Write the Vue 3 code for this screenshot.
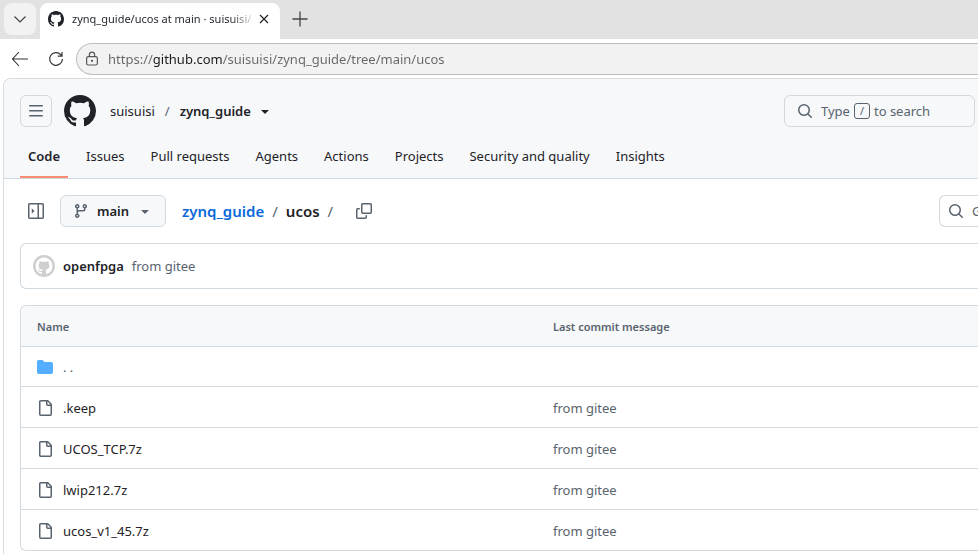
<script setup>
import { h, ref } from 'vue'

const paths = {
  github: 'M8 0c4.42 0 8 3.58 8 8a8.013 8.013 0 0 1-5.45 7.59c-.4.08-.55-.17-.55-.38 0-.27.01-1.13.01-2.2 0-.75-.25-1.23-.54-1.48 1.78-.2 3.65-.88 3.65-3.95 0-.88-.31-1.59-.82-2.15.08-.2.36-1.02-.08-2.12 0 0-.67-.22-2.2.82-.64-.18-1.32-.27-2-.27-.68 0-1.36.09-2 .27-1.53-1.03-2.2-.82-2.2-.82-.44 1.1-.16 1.92-.08 2.12-.51.56-.82 1.28-.82 2.15 0 3.06 1.86 3.75 3.64 3.95-.23.2-.44.55-.51 1.07-.46.21-1.61.55-2.33-.66-.15-.24-.6-.83-1.23-.82-.67.01-.27.38.01.53.34.19.73.9.82 1.13.16.45.68 1.31 2.69.94 0 .67.01 1.3.01 1.49 0 .21-.15.45-.55.38A7.995 7.995 0 0 1 0 8c0-4.42 3.58-8 8-8Z',
  menu: 'M1 2.75A.75.75 0 0 1 1.75 2h12.5a.75.75 0 0 1 0 1.5H1.75A.75.75 0 0 1 1 2.75Zm0 5A.75.75 0 0 1 1.75 7h12.5a.75.75 0 0 1 0 1.5H1.75A.75.75 0 0 1 1 7.75ZM1.75 12h12.5a.75.75 0 0 1 0 1.5H1.75a.75.75 0 0 1 0-1.5Z',
  caret: 'm4.427 7.427 3.396 3.396a.25.25 0 0 0 .354 0l3.396-3.396A.25.25 0 0 0 11.396 7H4.604a.25.25 0 0 0-.177.427Z',
  search: 'M10.68 11.74a6 6 0 0 1-7.922-8.982 6 6 0 0 1 8.982 7.922l3.04 3.04a.749.749 0 0 1-.326 1.275.749.749 0 0 1-.734-.215ZM11.5 7a4.499 4.499 0 1 0-8.997 0A4.499 4.499 0 0 0 11.5 7Z',
  sidebar: 'M4.177 10.323l2.146-2.146a.25.25 0 0 0 0-.354L4.177 5.677A.25.25 0 0 0 3.75 5.854v4.292a.25.25 0 0 0 .427.177ZM0 1.75C0 .784.784 0 1.75 0h12.5C15.216 0 16 .784 16 1.75v12.5A1.75 1.75 0 0 1 14.25 16H1.75A1.75 1.75 0 0 1 0 14.25Zm1.75-.25a.25.25 0 0 0-.25.25v12.5c0 .138.112.25.25.25H9.5v-13Zm12.5 13a.25.25 0 0 0 .25-.25V1.75a.25.25 0 0 0-.25-.25H11v13Z',
  branch: 'M9.5 3.25a2.25 2.25 0 1 1 3 2.122V6A2.5 2.5 0 0 1 10 8.5H6a1 1 0 0 0-1 1v1.128a2.251 2.251 0 1 1-1.5 0V5.372a2.25 2.25 0 1 1 1.5 0v1.836A2.493 2.493 0 0 1 6 7h4a1 1 0 0 0 1-1v-.628A2.25 2.25 0 0 1 9.5 3.25Zm-6 0a.75.75 0 1 0 1.5 0 .75.75 0 0 0-1.5 0Zm8.25-.75a.75.75 0 1 0 0 1.5.75.75 0 0 0 0-1.5ZM4.25 12a.75.75 0 1 0 0 1.5.75.75 0 0 0 0-1.5Z',
  copy: 'M0 6.75C0 5.784.784 5 1.75 5h1.5a.75.75 0 0 1 0 1.5h-1.5a.25.25 0 0 0-.25.25v7.5c0 .138.112.25.25.25h7.5a.25.25 0 0 0 .25-.25v-1.5a.75.75 0 0 1 1.5 0v1.5A1.75 1.75 0 0 1 9.25 16h-7.5A1.75 1.75 0 0 1 0 14.25ZM5 1.75C5 .784 5.784 0 6.75 0h7.5C15.216 0 16 .784 16 1.75v7.5A1.75 1.75 0 0 1 14.25 11h-7.5A1.75 1.75 0 0 1 5 9.25Zm1.75-.25a.25.25 0 0 0-.25.25v7.5c0 .138.112.25.25.25h7.5a.25.25 0 0 0 .25-.25v-7.5a.25.25 0 0 0-.25-.25Z',
  folder: 'M1.75 1A1.75 1.75 0 0 0 0 2.75v10.5C0 14.216.784 15 1.75 15h12.5A1.75 1.75 0 0 0 16 13.25v-8.5A1.75 1.75 0 0 0 14.25 3H7.5a.25.25 0 0 1-.2-.1l-.9-1.2C6.07 1.26 5.55 1 5 1H1.75Z',
  file: 'M2 1.75C2 .784 2.784 0 3.75 0h6.586c.464 0 .909.184 1.237.513l2.914 2.914c.329.328.513.773.513 1.237v9.586A1.75 1.75 0 0 1 13.25 16h-9.5A1.75 1.75 0 0 1 2 14.25Zm1.75-.25a.25.25 0 0 0-.25.25v12.5c0 .138.112.25.25.25h9.5a.25.25 0 0 0 .25-.25V6h-2.75A1.75 1.75 0 0 1 9 4.25V1.5Zm6.75.062V4.25c0 .138.112.25.25.25h2.688l-.011-.013-2.914-2.914-.013-.011Z',
}

const Icon = ({ name }) =>
  h('svg', { viewBox: '0 0 16 16', class: 'icon', fill: 'currentColor', 'aria-hidden': 'true' }, [
    h('path', { d: paths[name], 'fill-rule': 'evenodd' }),
  ])
Icon.props = ['name']

const url = ref('https://github.com/suisuisi/zynq_guide/tree/main/ucos')
const fileQuery = ref('')
const tabs = ['Code', 'Issues', 'Pull requests', 'Agents', 'Actions', 'Projects', 'Security and quality', 'Insights']
const files = ['.keep', 'UCOS_TCP.7z', 'lwip212.7z', 'ucos_v1_45.7z']
</script>

<template>
  <div class="browser">
    <div class="tabstrip">
      <button class="tab-list" aria-label="Tab list">
        <svg class="icon" viewBox="0 0 16 16" fill="none" stroke="currentColor" stroke-width="1.2"><path d="M2.5 5.5 8 11l5.500-5.500" /></svg>
      </button>
      <div class="tab">
        <Icon name="github" />
        <span class="tab-title">zynq_guide/ucos at main · suisuisi/</span>
        <button class="close" aria-label="Close tab">
          <svg viewBox="0 0 10 10" fill="none" stroke="currentColor" stroke-width="1.2"><path d="m1 1 8 8M9 1 1 9" /></svg>
        </button>
      </div>
      <button class="new-tab" aria-label="New tab">
        <svg class="icon" viewBox="0 0 16 16" fill="none" stroke="currentColor" stroke-width="1.300"><path d="M8 .5v15M.5 8h15" /></svg>
      </button>
    </div>

    <div class="toolbar">
      <button class="nav-button" aria-label="Back">
        <svg class="icon" viewBox="0 0 16 16" fill="none" stroke="currentColor" stroke-width="1.100"><path d="M7 1 .6 8 7 15M.6 8H16" /></svg>
      </button>
      <button class="nav-button" aria-label="Reload">
        <svg class="icon" viewBox="0 0 16 16" fill="none" stroke="currentColor" stroke-width="1.200"><path d="M14.400 8A6.400 6.400 0 1 1 12.800 3.700L13.800 5M14 1v4.200H9.800" /></svg>
      </button>
      <label class="address">
        <svg class="lock" viewBox="0 0 14 16" fill="none" stroke="currentColor" stroke-width="1.200"><rect x="1.600" y="5.600" width="10.800" height="8.400" rx="1.800" /><path d="M4.400 5.600V3.800a2.600 2.600 0 0 1 5.200 0v1.800" /><circle cx="7" cy="9.800" r=".5" fill="currentColor" /></svg>
        <input v-model="url" class="url" aria-label="Address" spellcheck="false" />
      </label>
    </div>

    <div class="page">
      <header class="header">
        <div class="header-row">
          <button class="menu-button" aria-label="Open menu"><Icon name="menu" /></button>
          <a class="logo" href="#" aria-label="Homepage"><Icon name="github" /></a>
          <nav class="context" aria-label="Repository">
            <a href="#">suisuisi</a>
            <span class="slash">/</span>
            <a href="#" class="strong">zynq_guide</a>
            <button class="caret" aria-label="Switch repository"><Icon name="caret" /></button>
          </nav>
          <button class="search"><Icon name="search" /><span class="hint">Type <kbd>/</kbd> to search</span></button>
        </div>
        <nav class="tabs" aria-label="Sections">
          <a v-for="(tab, i) in tabs" :key="tab" href="#" :class="{ active: i === 0 }">{{ tab }}</a>
        </nav>
      </header>

      <main class="content">
        <div class="file-bar">
          <button class="tree-toggle" aria-label="Expand file tree"><Icon name="sidebar" /></button>
          <button class="branch"><Icon name="branch" /><span>main</span><Icon name="caret" /></button>
          <nav class="crumbs" aria-label="Path">
            <a href="#">zynq_guide</a><span class="slash">/</span><strong>ucos</strong><span class="slash">/</span>
          </nav>
          <button class="copy" aria-label="Copy path"><Icon name="copy" /></button>
          <label class="go-to"><Icon name="search" /><input v-model="fileQuery" placeholder="Go to file" aria-label="Go to file" /></label>
        </div>

        <section class="commit">
          <svg class="avatar" viewBox="0 0 22 22" aria-hidden="true">
            <circle cx="11" cy="11" r="11" fill="#cfcfcf" />
            <path transform="translate(2.600 2.600) scale(1.050)" :d="paths.github" fill="#fff" />
          </svg>
          <a href="#" class="author">openfpga</a>
          <a href="#" class="muted">from gitee</a>
        </section>

        <div class="listing">
          <table>
            <thead>
              <tr><th scope="col" class="name-col">Name</th><th scope="col">Last commit message</th></tr>
            </thead>
            <tbody>
              <tr class="parent">
                <td colspan="2"><a href="#" class="entry up"><Icon name="folder" /><span>. .</span></a></td>
              </tr>
              <tr v-for="file in files" :key="file">
                <td><a href="#" class="entry"><Icon name="file" /><span>{{ file }}</span></a></td>
                <td><a href="#" class="muted">from gitee</a></td>
              </tr>
            </tbody>
          </table>
        </div>
      </main>
    </div>
  </div>
</template>

<style>
body {
  background: #fff;
  overflow-x: hidden;
}
</style>

<style scoped>
.browser {
  font-family: "Noto Sans", "Open Sans", sans-serif;
  font-size: 13px;
  line-height: 20px;
  color: #1f2328;
}
.browser *, .browser *::before { box-sizing: border-box; }
button, input {
  font: inherit;
  color: inherit;
  background: none;
  border: 0;
  padding: 0;
  margin: 0;
  outline: 0;
}
a { color: inherit; text-decoration: none; }
.icon { width: 16px; height: 16px; flex: none; display: block; }

.tabstrip {
  display: flex;
  height: 39px;
  padding: 3px 4px 0;
  background: #e2e2e2;
}
.tab-list {
  display: grid;
  place-items: center;
  width: 32px;
  height: 32px;
  border-radius: 8px;
  background: #f2f2f2;
  color: #444;
}
.tab {
  display: flex;
  align-items: center;
  width: 240px;
  margin-left: 4px;
  padding: 0 10px 4px 8px;
  gap: 8px;
  border-radius: 8px 8px 0 0;
  background: #fff;
  font-size: 11px;
}
.tab-title {
  flex: 1;
  white-space: nowrap;
  mask-image: linear-gradient(to right, #000 calc(100% - 20px), rgb(0 0 0 / 20%));
}
.close { width: 10px; height: 10px; margin-right: 1px; }
.close svg { display: block; width: 10px; height: 10px; }
.new-tab { height: 32px; padding: 0 12px; color: #444; }

.toolbar {
  display: flex;
  align-items: center;
  height: 39px;
  padding-left: 12px;
  gap: 20px;
}
.nav-button { color: #333; }
.address {
  display: flex;
  align-items: center;
  flex: 1;
  gap: 9px;
  height: 32px;
  padding-left: 8px;
  margin-left: -8px;
  border: 1px solid #bdbdbd;
  border-right: 0;
  border-radius: 16px 0 0 16px;
  background: #f2f2f2;
}
.lock { width: 14px; height: 16px; color: #555; }
.url {
  flex: 1;
  min-width: 0;
  color: transparent;
  background: linear-gradient(to right, #666 45px, #1b1b1b 45px 115px, #666 115px);
  background-clip: text;
}

.page {
  margin-left: 3px;
  border: 1px solid #d8dbde;
  border-width: 1px 0 0 1px;
  border-radius: 8px 0 0 0;
  overflow: hidden;
}
.header {
  padding: 16px 3px 0 16px;
  background: #f6f8fa;
  border-bottom: 1px solid #d1d9e0;
}
.header-row { display: flex; align-items: center; height: 32px; }
.menu-button {
  display: grid;
  place-items: center;
  width: 32px;
  height: 32px;
  border: 1px solid #d1d9e0;
  border-radius: 6px;
  color: #59636e;
}
.logo { margin: 0 14px 0 12px; }
.logo .icon { width: 32px; height: 32px; }
.context { display: flex; align-items: center; }
.context .slash { padding: 0 10px; color: #59636e; }
.strong { font-weight: 600; }
.caret { margin-left: 6px; }
.search {
  display: flex;
  align-items: center;
  gap: 8px;
  width: 191px;
  height: 32px;
  margin-left: auto;
  padding: 0 12px;
  border: 1px solid #d1d9e0;
  border-radius: 6px;
  color: #59636e;
}
.hint { display: flex; align-items: center; gap: 4px; }
.search kbd {
  width: 16px;
  height: 16px;
  border: 1px solid #59636e;
  border-radius: 3px;
  font-family: inherit;
  font-size: 11px;
  line-height: 14px;
  text-align: center;
}
.tabs { display: flex; gap: 10px; padding-top: 4px; }
.tabs a { height: 47px; padding: 15px 8px 0; white-space: nowrap; }
.tabs .active { font-weight: 600; box-shadow: inset 0 -2px #fd8c73; }

.content { padding: 16px 0 3px 16px; }
.file-bar { display: flex; align-items: center; height: 32px; }
.tree-toggle { padding: 8px; color: #59636e; }
.branch {
  display: flex;
  align-items: center;
  gap: 8px;
  height: 32px;
  padding: 0 12px;
  margin-left: 8px;
  border: 1px solid #d1d9e0;
  border-radius: 6px;
  background: #f6f8fa;
  font-weight: 600;
}
.branch .icon { color: #59636e; }
.crumbs { display: flex; gap: 8px; margin-left: 16px; font-size: 15px; }
.crumbs a { color: #0969da; font-weight: 600; }
.crumbs strong { font-weight: 600; }
.crumbs .slash { color: #59636e; }
.copy { padding: 8px; margin-left: 15px; color: #59636e; }
.go-to {
  display: flex;
  align-items: center;
  gap: 8px;
  width: 39px;
  height: 32px;
  margin-left: auto;
  padding-left: 8px;
  border: 1px solid #d1d9e0;
  border-right: 0;
  border-radius: 6px 0 0 6px;
  overflow: hidden;
  color: #59636e;
}
.go-to input { width: 120px; flex: none; }
.go-to input::placeholder { color: #59636e; }

.commit {
  display: flex;
  align-items: center;
  gap: 8px;
  height: 46px;
  margin: 16px 0;
  padding: 0 12px;
  border: 1px solid #d1d9e0;
  border-right: 0;
  border-radius: 6px 0 0 6px;
}
.avatar { width: 22px; height: 22px; }
.author { font-weight: 600; }
.muted { color: #59636e; }

.listing {
  border: 1px solid #d1d9e0;
  border-right: 0;
  border-radius: 6px 0 0 6px;
  overflow: hidden;
}
table { width: 100%; border-spacing: 0; table-layout: fixed; }
th {
  height: 40px;
  padding: 2px 16px 0;
  background: #f6f8fa;
  color: #59636e;
  font-size: 11px;
  font-weight: 600;
  text-align: left;
}
.name-col { width: 516px; }
td { height: 41px; padding: 2px 16px 0; border-top: 1px solid #d1d9e0; }
.parent td { height: 40px; padding-top: 0; }
.entry { display: flex; align-items: center; gap: 10px; }
.entry .icon { color: #59636e; }
.up { color: #59636e; }
.up .icon { color: #54aeff; }
</style>
